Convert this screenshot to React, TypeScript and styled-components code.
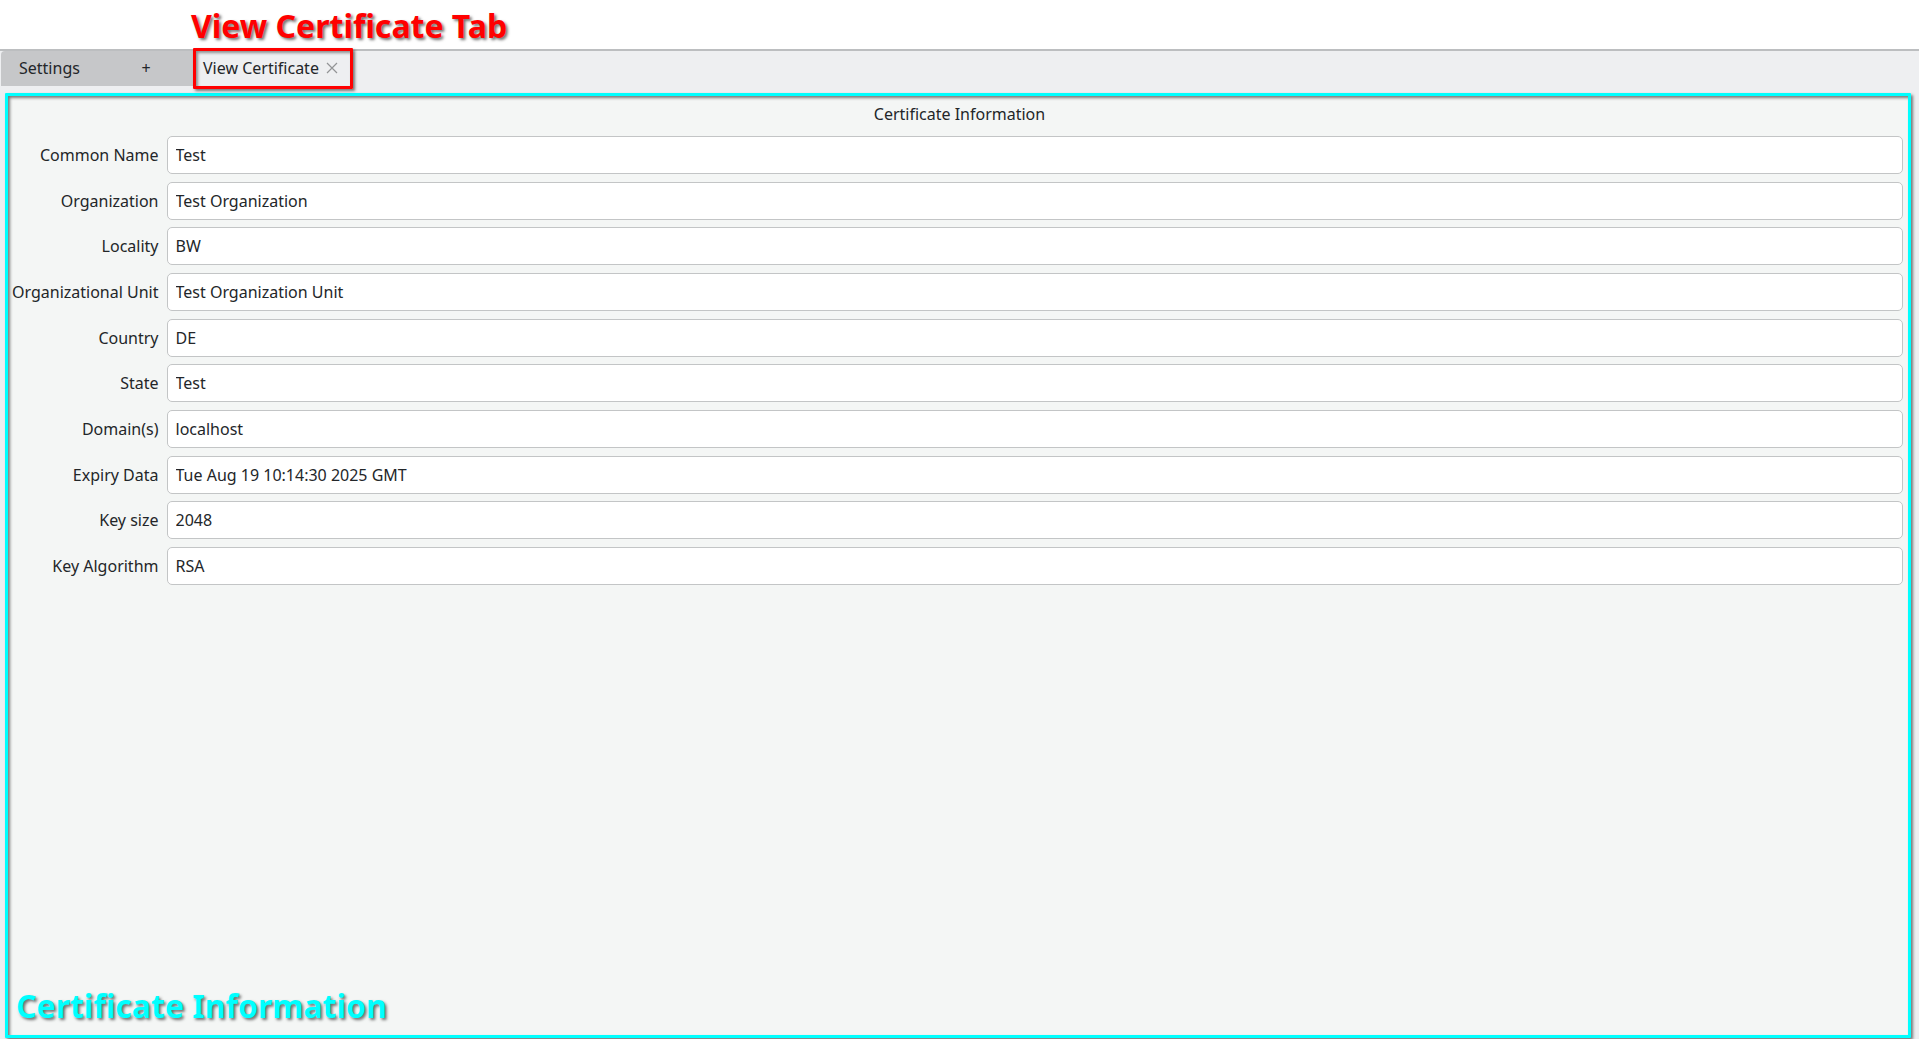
import React from "react";
import styled, { createGlobalStyle } from "styled-components";

const GlobalStyle = createGlobalStyle`
  *, *::before, *::after { box-sizing: border-box; }
  body { margin: 0; background: #ffffff; }
  body, button, input {
    font-family: "Noto Sans", "Open Sans", sans-serif;
    font-size: 16px;
    line-height: 22px;
    color: #232629;
  }
`;

const Page = styled.div`
  display: flex;
  flex-direction: column;
  min-height: 100vh;
`;

const Callout = styled.h2<{ $color: string }>`
  margin: 0;
  font-size: 32px;
  line-height: 44px;
  font-weight: 700;
  color: ${(p) => p.$color};
  text-shadow: 2px 2px 3px rgba(0, 0, 0, 0.55);
`;

const Banner = styled.header`
  height: 49px;
  padding: 4px 0 0 191px;
`;

const Shell = styled.main`
  flex: 1;
  display: flex;
  flex-direction: column;
  background: #eeeff1;
  border-top: 2px solid #bcbec0;
`;

const TabBar = styled.nav`
  display: flex;
  height: 35px;
  padding-left: 1px;
`;

const TabGroup = styled.div`
  display: flex;
  width: 194px;
  background: #c6c7c9;
  border-top-left-radius: 4px;
`;

const Tab = styled.button<{ $width: number }>`
  width: ${(p) => p.$width}px;
  padding: 0 0 2px 18px;
  border: 0;
  background: transparent;
  text-align: left;
`;

const AddTab = styled.button`
  flex: 1;
  padding: 0 0 2px;
  border: 0;
  background: transparent;
  text-align: center;
`;

const ActiveTab = styled.div`
  position: relative;
  display: flex;
  align-items: center;
  width: 158px;
  padding: 0 0 2px 8px;
  gap: 7px;

  &::after {
    content: "";
    position: absolute;
    inset: -3px 0 -3px -2px;
    border: 3px solid #ff0000;
    border-radius: 1px;
    box-shadow: 2px 2px 3px rgba(0, 0, 0, 0.5), inset 2px 2px 3px rgba(0, 0, 0, 0.4);
    pointer-events: none;
  }
`;

const TabLabel = styled.button`
  padding: 0;
  border: 0;
  background: transparent;
  white-space: nowrap;
`;

const CloseButton = styled.button`
  display: flex;
  padding: 0;
  border: 0;
  background: transparent;
  color: #929496;
`;

const Panel = styled.section`
  flex: 1;
  display: flex;
  flex-direction: column;
  margin: 7px 8px 1px 5px;
  padding: 7px 5px 7px 4px;
  border: 3px solid #00ffff;
  border-radius: 1px;
  background: #f4f6f5;
  box-shadow: 2px 2px 3px rgba(0, 0, 0, 0.5), inset 2px 2px 3px rgba(0, 0, 0, 0.5);
`;

const Title = styled.h1`
  margin: 0 0 11px;
  padding-left: 4px;
  font-size: 16px;
  line-height: 22px;
  font-weight: 400;
  text-align: center;
`;

const Form = styled.form`
  display: grid;
  grid-template-columns: max-content 1fr;
  grid-auto-rows: 38px;
  align-content: space-between;
  align-items: center;
  column-gap: 8px;
  min-height: 449px;
`;

const Label = styled.label`
  text-align: right;
`;

const Field = styled.input`
  width: 100%;
  height: 38px;
  padding: 0 8px;
  border: 1px solid #c3c5c6;
  border-radius: 5px;
  background: #ffffff;
  outline: none;
`;

const PanelFooter = styled.footer`
  margin-top: auto;
  padding-left: 4px;
`;

const fields = [
  { id: "common-name", label: "Common Name", value: "Test" },
  { id: "organization", label: "Organization", value: "Test Organization" },
  { id: "locality", label: "Locality", value: "BW" },
  { id: "organizational-unit", label: "Organizational Unit", value: "Test Organization Unit" },
  { id: "country", label: "Country", value: "DE" },
  { id: "state", label: "State", value: "Test" },
  { id: "domains", label: "Domain(s)", value: "localhost" },
  { id: "expiry", label: "Expiry Data", value: "Tue Aug 19 10:14:30 2025 GMT" },
  { id: "key-size", label: "Key size", value: "2048" },
  { id: "key-algorithm", label: "Key Algorithm", value: "RSA" },
];

export default function App() {
  return (
    <Page>
      <GlobalStyle />
      <Banner>
        <Callout $color="#ff0000">View Certificate Tab</Callout>
      </Banner>
      <Shell>
        <TabBar>
          <TabGroup>
            <Tab type="button" $width={96}>Settings</Tab>
            <AddTab type="button">+</AddTab>
          </TabGroup>
          <ActiveTab>
            <TabLabel type="button">View Certificate</TabLabel>
            <CloseButton type="button" aria-label="Close tab">
              <svg width="12" height="12" viewBox="0 0 12 12" fill="none" stroke="currentColor" strokeWidth="1.2">
                <path d="M1 1 L11 11 M11 1 L1 11" />
              </svg>
            </CloseButton>
          </ActiveTab>
        </TabBar>
        <Panel>
          <Title>Certificate Information</Title>
          <Form>
            {fields.map((f) => (
              <React.Fragment key={f.id}>
                <Label htmlFor={f.id}>{f.label}</Label>
                <Field id={f.id} type="text" readOnly value={f.value} />
              </React.Fragment>
            ))}
          </Form>
          <PanelFooter>
            <Callout $color="#00ffff">Certificate Information</Callout>
          </PanelFooter>
        </Panel>
      </Shell>
    </Page>
  );
}
